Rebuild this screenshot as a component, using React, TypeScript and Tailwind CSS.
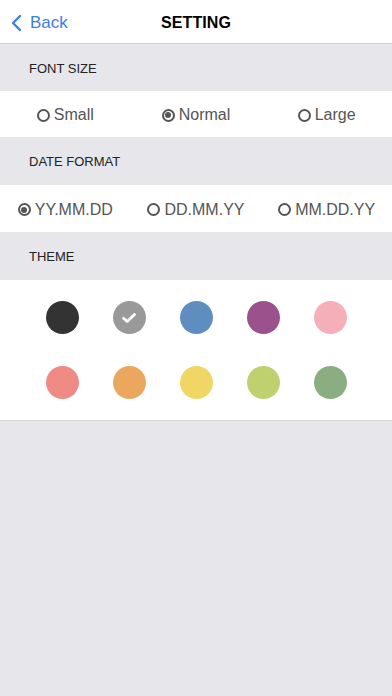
import React, { useState } from "react";

const font = { fontFamily: '"Liberation Sans", Arial, sans-serif' };

function Radio({ checked, label, onClick }: { checked: boolean; label: string; onClick: () => void }) {
  return (
    <button onClick={onClick} className="flex items-center justify-center gap-[4px] pt-[2px] text-[16px] text-[#555555]">
      <span className="flex h-[13px] w-[13px] items-center justify-center rounded-full border-[2px] border-[#555555]">
        {checked && <span className="h-[6px] w-[6px] rounded-full bg-[#555555]" />}
      </span>
      <span>{label}</span>
    </button>
  );
}

function SectionHeader({ title, h }: { title: string; h: string }) {
  return (
    <div className={`flex items-center pl-[29px] pt-[2px] text-[13px] text-[#222222] ${h}`}>{title}</div>
  );
}

const colors = [
  "#333333", "#999999", "#5f8dc0", "#9b528c", "#f4afb9",
  "#f08a85", "#eba75e", "#f0d765", "#bfd06e", "#8aae82",
];

export default function App() {
  const [size, setSize] = useState(1);
  const [fmt, setFmt] = useState(0);
  const [theme, setTheme] = useState(1);
  return (
    <div style={font} className="flex min-h-[696px] w-[392px] flex-col bg-[#e6e6eb]">
      <div className="relative flex h-[44px] items-center justify-center border-b border-[#d0d0d4] bg-white pt-[2px]">
        <button className="absolute left-[10px] top-0 flex h-[44px] items-center gap-[6px] pt-[2px] text-[17px] text-[#3a80e8]">
          <svg width="14" height="18" viewBox="0 0 14 18" fill="none">
            <path d="M10 2 L3 9 L10 16" stroke="#3a80e8" strokeWidth="2.4" strokeLinecap="round" strokeLinejoin="round" />
          </svg>
          <span>Back</span>
        </button>
        <div className="text-[16px] font-bold tracking-[0.1px] text-black">SETTING</div>
      </div>

      <SectionHeader title="FONT SIZE" h="h-[47px]" />
      <div className="grid h-[46px] grid-cols-3 items-center bg-white">
        {["Small", "Normal", "Large"].map((l, i) => (
          <Radio key={l} label={l} checked={size === i} onClick={() => setSize(i)} />
        ))}
      </div>

      <SectionHeader title="DATE FORMAT" h="h-[48px]" />
      <div className="grid h-[47px] grid-cols-3 items-center bg-white">
        {["YY.MM.DD", "DD.MM.YY", "MM.DD.YY"].map((l, i) => (
          <Radio key={l} label={l} checked={fmt === i} onClick={() => setFmt(i)} />
        ))}
      </div>

      <SectionHeader title="THEME" h="h-[48px]" />
      <div className="flex h-[141px] flex-col gap-[32px] border-b border-[#d8d8dc] bg-white pt-[21px]">
        {[0, 1].map((r) => (
          <div key={r} className="flex justify-center gap-[34px]">
            {colors.slice(r * 5, r * 5 + 5).map((c, j) => {
              const idx = r * 5 + j;
              return (
                <button
                  key={c}
                  onClick={() => setTheme(idx)}
                  className="flex h-[33px] w-[33px] items-center justify-center rounded-full"
                  style={{ backgroundColor: c }}
                >
                  {theme === idx && (
                    <svg width="16" height="12" viewBox="0 0 16 12" fill="none">
                      <path d="M2.5 6.2 L6.2 9.5 L13.5 2.5" stroke="white" strokeWidth="2.8" strokeLinecap="round" strokeLinejoin="round" />
                    </svg>
                  )}
                </button>
              );
            })}
          </div>
        ))}
      </div>
    </div>
  );
}
